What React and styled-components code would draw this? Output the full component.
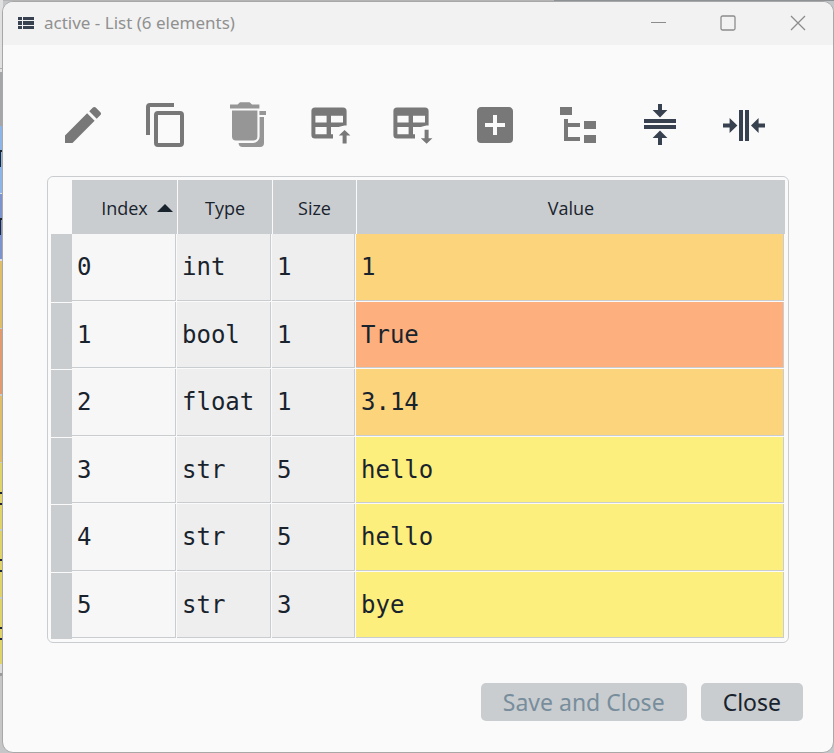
import React from "react";
import styled, { createGlobalStyle } from "styled-components";

const INK = "#19232d";
const LINE = "#c9cdd0";
const PAPER = "#fafafa";

const GlobalStyle = createGlobalStyle`
  *, *::before, *::after { box-sizing: border-box; }
  body { margin: 0; color: ${INK}; font-family: "Open Sans", "Noto Sans", sans-serif; }
  button { font: inherit; color: inherit; border: 0; padding: 0; background: none; }
`;

/* The sliver of the window behind shows along the left edge. */
const Backdrop = styled.div`
  display: flex;
  min-height: 100vh;
  padding: 1px 0 0 2px;
  background:
    linear-gradient(
      transparent 152px, #1c2530 152px 167px, transparent 167px 220px,
      #1c2530 220px 235px, transparent 235px
    ) 0 0 / 1px 100% no-repeat,
    linear-gradient(
      #e0e0e0 68px, #b0b0b0 68px 69px, #e0e0e0 69px 72px,
      #a4a6a8 72px 126px,
      #8db5e8 126px 150px, #1c2530 150px 152px, #8db5e8 152px 193px, #dde2e8 193px 194px,
      #7c93cf 194px 218px, #1c2530 218px 220px, #7c93cf 220px 259px, #dde2e8 259px 261px,
      #e2bd68 261px 328px, #c8cccf 328px 329px,
      #e39a6c 329px 394px, #c8cccf 394px 396px,
      #e2bd68 396px 462px, #c8cccf 462px 463px,
      #e0d468 463px 492px, #1c2530 492px 494px, #e0d468 494px 503px, #1c2530 503px 505px,
      #e0d468 505px 529px, #c8cccf 529px 531px,
      #e0d468 531px 559px, #1c2530 559px 561px, #e0d468 561px 570px, #1c2530 570px 572px,
      #e0d468 572px 597px, #c8cccf 597px 599px,
      #e0d468 599px 627px, #1c2530 627px 629px, #e0d468 629px 638px, #1c2530 638px 640px,
      #e0d468 640px 664px, #dcdcdc 664px 673px, #9a9a9a 673px 676px, #c6c6c6 676px
    ) 0 0 / 3px 100% no-repeat,
    linear-gradient(90deg, #b4b4b4 554px, #8f9294 554px) 0 0 / 100% 1px no-repeat,
    #c4c7c9;
`;

const Window = styled.section`
  flex: 1;
  display: flex;
  flex-direction: column;
  overflow: hidden;
  border: 1px solid #a8a8a8;
  border-radius: 11px;
  background: ${PAPER};
`;

const TitleBar = styled.header`
  display: flex;
  align-items: center;
  gap: 10px;
  height: 43px;
  padding: 0 0 2px 15px;
  background: #f2f2f2;
`;

const Title = styled.h1`
  flex: 1;
  margin: 0;
  color: #909090;
  font-size: 17px;
  font-weight: 400;
  line-height: 24px;
  font-family: "Noto Sans", sans-serif;
`;

const WindowControls = styled.div`
  display: flex;
`;

const WindowButton = styled.button`
  display: grid;
  place-items: center;
  width: 70px;
  height: 40px;
`;

const Content = styled.main`
  display: flex;
  flex-direction: column;
  padding: 56px 0 30px;
`;

const Toolbar = styled.div`
  display: grid;
  grid-template-columns: repeat(9, 1fr);
  justify-items: center;
  padding: 0 49px 0 39px;
`;

const ToolButton = styled.button`
  height: 48px;
  width: 48px;
  color: ${({ $tone }) => $tone};
  svg { display: block; }
`;

const TablePanel = styled.div`
  margin: 27px 44px 0;
  padding: 3px;
  border: 1px solid ${LINE};
  border-radius: 6px;
`;

const Table = styled.table`
  width: 100%;
  table-layout: fixed;
  border-collapse: separate;
  border-spacing: 0;
  th, td { padding: 0; }
`;

const Column = styled.col`
  width: ${({ $width }) => $width};
`;

const HeadCell = styled.th`
  height: 54px;
  background: ${LINE};
  font-size: 18px;
  font-weight: 400;
  line-height: 24px;
  & + & { border-left: 1px solid ${PAPER}; }
`;

const SortButton = styled.button`
  display: grid;
  grid-template-columns: 1fr auto 1fr;
  align-items: center;
  width: 100%;
  height: 54px;
  padding: 2px 4px 0;
`;

const SortMark = styled.svg`
  grid-column: 3;
  justify-self: end;
`;

const SortText = styled.span`
  grid-column: 2;
`;

const Row = styled.tr`
  height: 68px;
  &:nth-child(even) { height: 67px; }
`;

const RowHead = styled.th`
  background: ${LINE};
  tr + tr > & { box-shadow: inset 0 1px ${PAPER}; }
`;

const Cell = styled.td`
  && { padding: 0 0 2px 5px; }
  background: ${({ $fill }) => $fill};
  box-shadow: inset -1px -1px ${PAPER}, inset -2px -2px ${LINE};
  font-family: "DejaVu Sans Mono", monospace;
  font-size: 24px;
  line-height: 28px;
`;

const Footer = styled.footer`
  display: flex;
  justify-content: flex-end;
  gap: 14px;
  margin: 40px 30px 0;
`;

const PushButton = styled.button`
  height: 38px;
  padding: 0 22px;
  border-radius: 5px;
  background: ${LINE};
  font-family: "Noto Sans", sans-serif;
  font-size: 23px;
  line-height: 32px;
  &:disabled { color: #788d9c; }
`;

const GREY = "#787878";
const FADED = "#969696";
const NAVY = "#37414f";

const GRID =
  "M4 3.2H18A1.8 1.8 0 0 1 19.8 5V12.2C18.3 12.2 17 12.5 15.8 13H12V16.6H13V18.8H4A1.8 1.8 0 0 1 2.2 17V5A1.8 1.8 0 0 1 4 3.2M4.2 7.4V10.8H9.8V7.4H4.2M12 7.4V10.8H18V7.4H12M4.2 13V16.6H9.8V13H4.2";

const tools = [
  { label: "Edit", tone: GREY, d: "M20.71,7.04C21.1,6.65 21.1,6 20.71,5.63L18.37,3.29C18,2.9 17.35,2.9 16.96,3.29L15.12,5.12L18.87,8.87M3,17.25V21H6.75L17.81,9.93L14.06,6.18L3,17.25Z" },
  { label: "Duplicate", tone: GREY, d: "M19,21H8V7H19M19,5H8A2,2 0 0,0 6,7V21A2,2 0 0,0 8,23H19A2,2 0 0,0 21,21V7A2,2 0 0,0 19,5M16,1H4A2,2 0 0,0 2,3V17H4V3H16V1Z" },
  { label: "Remove", tone: FADED, d: "M3 1.8H6.8L8 .6H12.8L14 1.8H17.7V3.8H3ZM4 4.8H16.7V17.7A2 2 0 0 1 14.7 19.7H6A2 2 0 0 1 4 17.7ZM17.7 5H21V7H17.7ZM17.8 8H20V21A2 2 0 0 1 18 23H9.3A2 2 0 0 1 7.3 21H14.5A3.3 3.3 0 0 0 17.8 17.7Z" },
  { label: "Insert above", tone: GREY, d: GRID + "M18.8 14.5L21.7 17.3H19.8V21.3H17.8V17.3H15.9Z" },
  { label: "Insert below", tone: GREY, d: GRID + "M18.8 21.4L21.7 18.6H19.8V14.4H17.8V18.6H15.9Z" },
  { label: "Insert", tone: GREY, d: "M17,13H13V17H11V13H7V11H11V7H13V11H17M19,3H5C3.89,3 3,3.89 3,5V19A2,2 0 0,0 5,21H19A2,2 0 0,0 21,19V5C21,3.89 20.1,3 19,3Z" },
  { label: "View with the Object Explorer", tone: GREY, d: "M3,3H9V7H3V3M15,10H21V14H15V10M15,17H21V21H15V17M13,13H7V18H13V20H5V9H7V11H13V13Z" },
  { label: "Resize rows to contents", tone: NAVY, d: "M4 9H20V11H4ZM4 12H20V14H4ZM11 1.5H13V4.5H15.7L12 8.2L8.3 4.5H11ZM12 14.8L15.7 18.5H13V22H11V18.5H8.3Z" },
  { label: "Resize columns to contents", tone: NAVY, d: "M10 4.5H12V20H10ZM13 4.5H15V20H13ZM2 11.2H5.3V8.5L9.2 12.2L5.3 16V13.2H2ZM23 11.2H19.8V8.5L16 12.2L19.8 16V13.2H23Z" },
];

const AMBER = "#fcd47c";
const SALMON = "#fdb07d";
const LEMON = "#fcef7d";

const rows = [
  ["0", "int", "1", "1", AMBER],
  ["1", "bool", "1", "True", SALMON],
  ["2", "float", "1", "3.14", AMBER],
  ["3", "str", "5", "hello", LEMON],
  ["4", "str", "5", "hello", LEMON],
  ["5", "str", "3", "bye", LEMON],
];

export default function App() {
  return (
    <>
      <GlobalStyle />
      <Backdrop>
        <Window>
          <TitleBar>
            <svg width="16" height="12" viewBox="0 0 16 12" fill={NAVY} aria-hidden="true">
              <path d="M0 0h4v3H0zM5 0h11v3H5zM0 4h4v4H0zM5 4h11v4H5zM0 9h4v3H0zM5 9h11v3H5z" />
            </svg>
            <Title>active - List (6 elements)</Title>
            <WindowControls>
              <WindowButton aria-label="Minimize">
                <svg width="16" height="16" stroke="#8c8c8c"><path d="M1 7.5h15" /></svg>
              </WindowButton>
              <WindowButton aria-label="Maximize">
                <svg width="16" height="16" fill="none" stroke="#8c8c8c" strokeWidth="1.3"><rect x="1" y="1" width="14" height="14" rx="1.5" /></svg>
              </WindowButton>
              <WindowButton aria-label="Close window">
                <svg width="16" height="16" stroke="#8c8c8c" strokeWidth="1.3"><path d="M1 1l14 14M15 1L1 15" /></svg>
              </WindowButton>
            </WindowControls>
          </TitleBar>
          <Content>
            <Toolbar role="toolbar">
              {tools.map((tool) => (
                <ToolButton key={tool.label} aria-label={tool.label} $tone={tool.tone}>
                  <svg width="48" height="48" viewBox="0 0 24 24" fill="currentColor" fillRule="evenodd">
                    <path d={tool.d} />
                  </svg>
                </ToolButton>
              ))}
            </Toolbar>
            <TablePanel>
              <Table>
                <colgroup>
                  <Column $width="21px" />
                  <Column $width="105px" />
                  <Column $width="95px" />
                  <Column $width="84px" />
                  <Column $width="auto" />
                </colgroup>
                <thead>
                  <tr>
                    <td />
                    <HeadCell scope="col" aria-sort="ascending">
                      <SortButton>
                        <SortText>Index</SortText>
                        <SortMark width="16" height="8" viewBox="0 0 16 8" fill={INK} aria-hidden="true">
                          <path d="M0 8L8 0l8 8z" />
                        </SortMark>
                      </SortButton>
                    </HeadCell>
                    {["Type", "Size", "Value"].map((name) => (
                      <HeadCell key={name} scope="col">
                        <SortButton><SortText>{name}</SortText></SortButton>
                      </HeadCell>
                    ))}
                  </tr>
                </thead>
                <tbody>
                  {rows.map(([index, type, size, value, fill]) => (
                    <Row key={index}>
                      <RowHead scope="row" aria-label={`Row ${index}`} />
                      <Cell $fill="#f7f7f7">{index}</Cell>
                      <Cell $fill="#eeeeee">{type}</Cell>
                      <Cell $fill="#eeeeee">{size}</Cell>
                      <Cell $fill={fill}>{value}</Cell>
                    </Row>
                  ))}
                </tbody>
              </Table>
            </TablePanel>
            <Footer>
              <PushButton disabled>Save and Close</PushButton>
              <PushButton>Close</PushButton>
            </Footer>
          </Content>
        </Window>
      </Backdrop>
    </>
  );
}
